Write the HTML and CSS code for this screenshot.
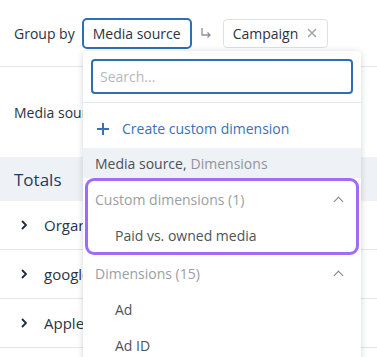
FILE: index.html
```html
<!DOCTYPE html>
<html lang="en">
  <head>
    <meta charset="UTF-8" />
    <meta name="viewport" content="width=device-width, initial-scale=1.0" />
    <title>Group by</title>
    <link rel="stylesheet" href="styles.css">
  </head>
  <body>
    <div class="toolbar">
      <span class="label">Group by</span>
      <button class="chip active">Media source</button>
      <span class="arrow">
        <svg width="12" height="12" viewBox="0 0 12 12"><path d="M2 1v7h8M7.5 5.5L10 8l-2.5 2.5" fill="none" stroke="#8a9099" stroke-width="1.3"/></svg>
      </span>
      <span class="chip">Campaign
        <svg class="close" width="10" height="10" viewBox="0 0 10 10"><path d="M1 1l8 8M9 1l-8 8" stroke="#9aa0a8" stroke-width="1.3"/></svg>
      </span>
    </div>

    <div class="subhead">Media source</div>

    <div class="totals">Totals</div>
    <div class="row"><svg class="chev" width="6" height="10" viewBox="0 0 6 10"><path d="M1 1l4 4-4 4" fill="none" stroke="#1f2a38" stroke-width="1.8"/></svg>Organic</div>
    <div class="row"><svg class="chev" width="6" height="10" viewBox="0 0 6 10"><path d="M1 1l4 4-4 4" fill="none" stroke="#1f2a38" stroke-width="1.8"/></svg>google</div>
    <div class="row"><svg class="chev" width="6" height="10" viewBox="0 0 6 10"><path d="M1 1l4 4-4 4" fill="none" stroke="#1f2a38" stroke-width="1.8"/></svg>Apple</div>

    <div class="dropdown">
      <div class="search-box">
        <input type="text" placeholder="Search...">
      </div>
      <div class="create">
        <svg class="plus" width="12" height="12" viewBox="0 0 12 12"><path d="M6 0v12M0 6h12" stroke="#3a70b8" stroke-width="2"/></svg>
        Create custom dimension
      </div>
      <div class="current">Media source, <span class="muted">Dimensions</span></div>
      <div class="group highlight">
        <div class="group-head">Custom dimensions (1)<span class="caret"></span></div>
        <div class="item">Paid vs. owned media</div>
      </div>
      <div class="group">
        <div class="group-head">Dimensions (15)<span class="caret"></span></div>
        <div class="item">Ad</div>
        <div class="item">Ad ID</div>
      </div>
    </div>
  </body>
</html>
```

FILE: styles.css
```css
/* General */
body {
  margin: 0;
  font-family: "Open Sans", "Noto Sans", sans-serif;
  font-size: 14px;
  color: #2a3342;
  background: white;
  overflow: hidden;
  height: 357px;
}

/* Toolbar */
.toolbar {
  display: flex;
  align-items: center;
  height: 66px;
  padding: 0 14px;
  border-bottom: 1px solid #e3e6ea;
}

.label {
  margin-right: 7px;
}

.chip {
  display: inline-flex;
  align-items: center;
  height: 27px;
  padding: 0 10px 0 9px;
  border: 1px solid #dde1e6;
  border-radius: 4px;
  background: white;
  font: inherit;
  color: inherit;
}

.chip.active {
  height: 31px;
  padding: 0 9px;
  border: 2px solid #2f6db5;
  border-radius: 5px;
}

.arrow {
  display: inline-flex;
  margin: 0 11px 0 8px;
}

.close {
  margin-left: 9px;
}

.subhead {
  padding: 36px 14px 0;
  height: 54px;
  box-sizing: border-box;
}

/* Table */
.totals {
  background: #eef2f6;
  height: 44px;
  padding: 0 14px;
  display: flex;
  align-items: center;
  font-size: 17px;
  color: #243a5e;
  margin-top: 36px;
}

.row {
  height: 48px;
  display: flex;
  align-items: center;
  padding-left: 21px;
  border-bottom: 1px solid #e3e6ea;
  font-size: 15px;
}

.row:first-of-type {
  height: 49px;
}

.chev {
  margin-right: 17px;
}

/* Dropdown */
.dropdown {
  position: absolute;
  left: 83px;
  top: 51px;
  width: 278px;
  height: 320px;
  background: white;
  border-radius: 4px 4px 0 0;
  box-shadow: 0 1px 6px rgba(30, 40, 60, 0.2);
}

.search-box {
  padding: 8px;
  border-bottom: 1px solid #e3e6ea;
}

.search-box input {
  width: 100%;
  height: 35px;
  box-sizing: border-box;
  border: 2px solid #2f6db5;
  border-radius: 4px;
  padding: 0 7px;
  font: inherit;
  outline: none;
}

.search-box input::placeholder {
  color: #b3b8bf;
}

.create {
  height: 45px;
  box-sizing: border-box;
  padding: 6px 0 0 14px;
  display: flex;
  align-items: center;
  color: #3a70b8;
}

.plus {
  margin-right: 13px;
}

.current {
  height: 30px;
  display: flex;
  align-items: center;
  padding-left: 12px;
  background: #eef2f6;
  color: #4a4f57;
}

.muted {
  color: #8e949c;
  margin-left: 4px;
}

.group {
  margin: 0 2px;
}

.group.highlight {
  border: 3px solid #a06cf5;
  border-radius: 9px;
  height: 77px;
  box-sizing: border-box;
}

.group-head {
  height: 36px;
  display: flex;
  align-items: center;
  justify-content: space-between;
  padding: 0 17px 0 10px;
  color: #9a9ea5;
}

.highlight .group-head {
  padding-left: 7px;
  padding-right: 14px;
}

.caret {
  width: 6px;
  height: 6px;
  border-left: 1.5px solid #7d8289;
  border-top: 1.5px solid #7d8289;
  transform: rotate(45deg);
  margin-top: 4px;
}

.item {
  height: 36px;
  display: flex;
  align-items: center;
  padding-left: 30px;
  color: #4e535a;
}

.highlight .item {
  padding-left: 27px;
}
```
